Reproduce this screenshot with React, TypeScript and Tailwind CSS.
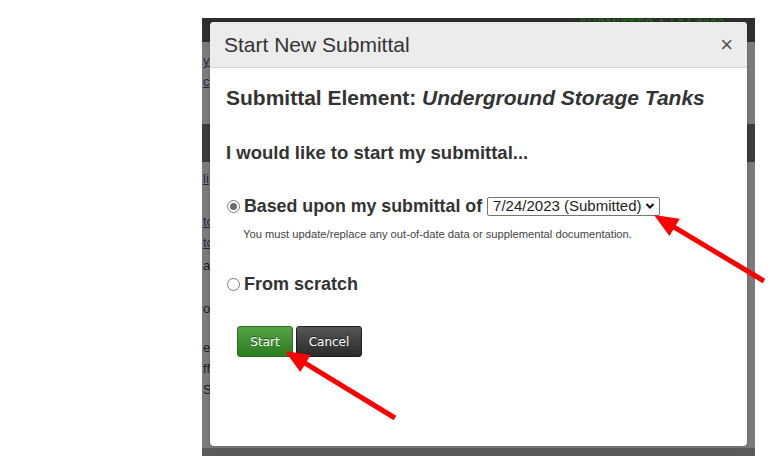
import React from 'react';

function Radio({ checked }: { checked?: boolean }) {
  return (
    <span className="w-[13px] h-[13px] rounded-full border border-[#7a7a7a] bg-white flex items-center justify-center shrink-0">
      {checked && <span className="w-[7px] h-[7px] rounded-full bg-[#6b6b6b]" />}
    </span>
  );
}

function Arrow({ x1, y1, x2, y2 }: { x1: number; y1: number; x2: number; y2: number }) {
  // line from tail (x1,y1) to tip (x2,y2)
  const dx = x2 - x1;
  const dy = y2 - y1;
  const len = Math.sqrt(dx * dx + dy * dy);
  const ux = dx / len;
  const uy = dy / len;
  const hl = 24;
  const hw = 10;
  const bx = x2 - ux * hl;
  const by = y2 - uy * hl;
  const p1 = `${bx - uy * hw},${by + ux * hw}`;
  const p2 = `${bx + uy * hw},${by - ux * hw}`;
  return (
    <g>
      <line x1={x1} y1={y1} x2={bx + ux * 2} y2={by + uy * 2} stroke="#ff0000" strokeWidth={5} />
      <polygon points={`${x2},${y2} ${p1} ${p2}`} fill="#ff0000" />
    </g>
  );
}

export default function App() {
  return (
    <div className="relative w-[771px] h-[470px] bg-white overflow-hidden" style={{ fontFamily: '"Liberation Sans", Arial, sans-serif' }}>
      <div className="pt-[18px] pl-[202px]">
        <div className="relative w-[553px] h-[438px] bg-[#7b7b7b] overflow-hidden">
          {/* dimmed page behind the dialog */}
          <div className="flex flex-col h-full">
            <div className="h-[24px] bg-[#2f2f2f] flex items-start justify-end pr-[30px] text-[12px] font-bold text-[#1f6a12] leading-[12px] tracking-wider">
              SUBMITTED 1 / 24 2023
            </div>
            <div className="flex flex-col text-[13px] text-[#1b1b1b] leading-none pl-[1px]">
              <span className="mt-[12px] underline text-[#1b2a4a]">y</span>
              <span className="mt-[8px] underline text-[#1b2a4a]">c</span>
            </div>
            <div className="mt-[36px] h-[38px] bg-[#3c3c3c]" />
            <div className="flex flex-col text-[13px] text-[#1b1b1b] leading-none pl-[1px]">
              <span className="mt-[10px] underline text-[#1b2a4a]">li</span>
              <span className="mt-[30px] underline text-[#1b2a4a]">tc</span>
              <span className="mt-[8px] underline text-[#1b2a4a]">tc</span>
              <span className="mt-[10px]">a/</span>
              <span className="mt-[30px]">o</span>
              <span className="mt-[26px]">e</span>
              <span className="mt-[8px]">ffi</span>
              <span className="mt-[8px]">S</span>
            </div>
            <div className="mt-auto h-[8px] bg-[#5a5a5a]" />
          </div>

          {/* dialog */}
          <div className="absolute left-[8px] top-[4px] w-[537px] h-[424px] bg-white rounded-[4px] flex flex-col shadow-[0_0_3px_rgba(0,0,0,0.3)]">
            <div className="h-[46px] bg-[#ececec] border-b border-[#d6d6d6] rounded-t-[4px] flex items-center justify-between pl-[14px] pr-[14px]">
              <span className="text-[21px] text-[#333333]">Start New Submittal</span>
              <span className="text-[22px] text-[#555555] leading-none">×</span>
            </div>
            <div className="flex flex-col pl-[16px] pt-[18px]">
              <div className="text-[21px] font-bold text-[#333333] leading-[24px]">
                Submittal Element: <span className="italic">Underground Storage Tanks</span>
              </div>
              <div className="mt-[32px] text-[18.5px] font-bold text-[#333333] leading-[22px]">
                I would like to start my submittal...
              </div>
              <div className="mt-[31px] flex items-center pl-[1px]">
                <Radio checked />
                <span className="ml-[4px] text-[17.8px] font-bold text-[#333333] leading-[22px]">Based upon my submittal of</span>
                <span className="ml-[5px] w-[173px] h-[19px] border border-[#767676] rounded-[2px] flex items-center justify-between pl-[5px] pr-[4px] text-[15px] text-[#222222]">
                  7/24/2023 (Submitted)
                  <svg width="10" height="8" viewBox="0 0 10 8">
                    <path d="M1.5 2 L5 5.5 L8.5 2" fill="none" stroke="#111" strokeWidth="2" />
                  </svg>
                </span>
              </div>
              <div className="mt-[10px] pl-[17px] text-[11.2px] text-[#444444] leading-[14px]">
                You must update/replace any out-of-date data or supplemental documentation.
              </div>
              <div className="mt-[32px] flex items-center pl-[1px]">
                <Radio />
                <span className="ml-[4px] text-[18px] font-bold text-[#333333] leading-[22px]">From scratch</span>
              </div>
              <div className="mt-[31px] pl-[11px] flex gap-[3px]">
                <button className="w-[56px] h-[31px] rounded-[3px] border border-[#2c6a1f] bg-gradient-to-b from-[#55a446] to-[#2b7d1f] text-white text-[12px] [text-shadow:0_-1px_0_rgba(0,0,0,0.5)]" style={{ fontFamily: 'Tahoma, "DejaVu Sans", sans-serif' }}>
                  Start
                </button>
                <button className="w-[66px] h-[31px] rounded-[3px] border border-[#1f1f1f] bg-gradient-to-b from-[#575757] to-[#2a2a2a] text-white text-[12px] [text-shadow:0_-1px_0_rgba(0,0,0,0.5)]" style={{ fontFamily: 'Tahoma, "DejaVu Sans", sans-serif' }}>
                  Cancel
                </button>
              </div>
            </div>
          </div>
        </div>
      </div>

      {/* annotation arrows */}
      <svg className="absolute inset-0 pointer-events-none" width="771" height="470">
        <Arrow x1={764} y1={281} x2={654} y2={215} />
        <Arrow x1={395} y1={418} x2={285} y2={351} />
      </svg>
    </div>
  );
}
